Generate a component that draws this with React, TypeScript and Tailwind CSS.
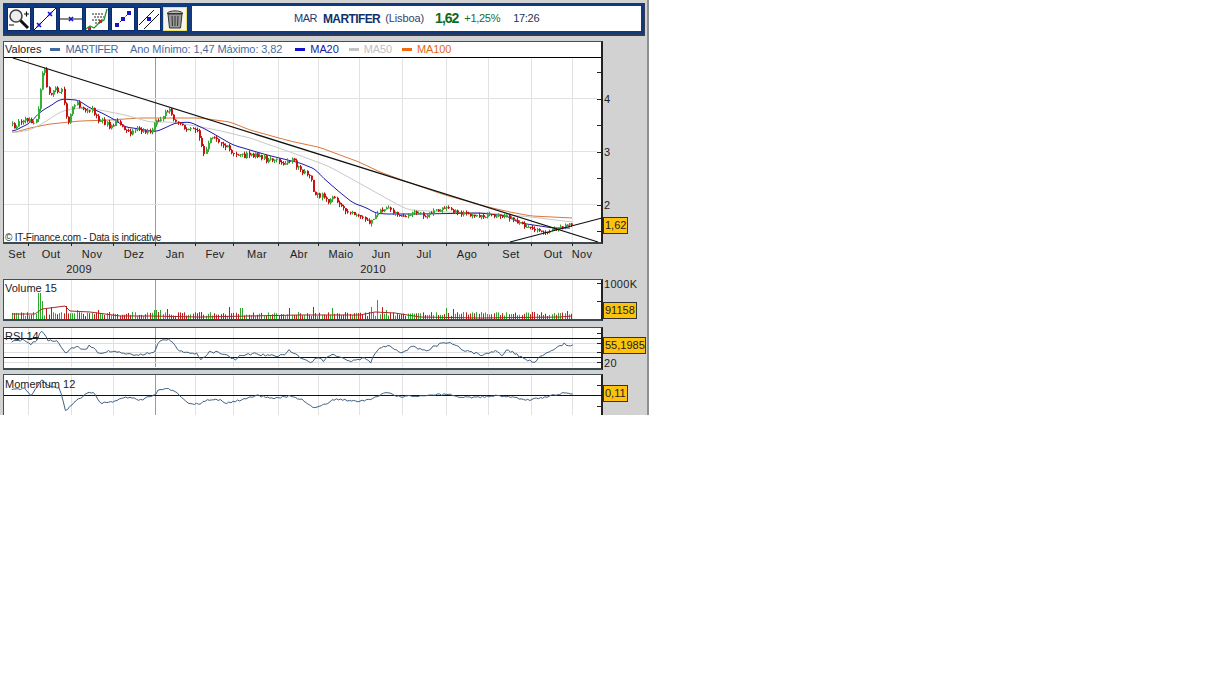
import React from "react";

type P = [number, number];

const lerp = (pts: P[], x: number) => {
  if (x <= pts[0][0]) return pts[0][1];
  for (let i = 1; i < pts.length; i++) {
    if (x <= pts[i][0]) {
      const [a, b] = pts[i - 1];
      const [c, d] = pts[i];
      return b + ((d - b) * (x - a)) / (c - a);
    }
  }
  return pts[pts.length - 1][1];
};
const line = (pts: P[]) => pts.map((p) => p[0].toFixed(1) + "," + p[1].toFixed(1)).join(" ");

let seed = 12345;
const rnd = () => {
  seed = (seed * 1664525 + 1013904223) % 4294967296;
  return seed / 4294967296;
};

const smooth = (pts: P[]) => {
  const start = pts[0][0];
  const end = pts[pts.length - 1][0];
  const out: P[] = [];
  for (let x = start; x <= end; x += 2) {
    let sum = 0;
    let n = 0;
    for (let k = -4; k <= 4; k += 2) {
      const q = x + k;
      if (q < start || q > end) continue;
      sum += lerp(pts, q);
      n++;
    }
    out.push([x, sum / n]);
  }
  return out;
};
const jitter = (pts: P[], amp: number) => {
  const out: P[] = [];
  const end = pts[pts.length - 1][0];
  for (let x = pts[0][0]; x <= end; x += 2.15) {
    out.push([x, lerp(pts, x) + (rnd() - 0.5) * amp]);
  }
  return out;
};

const price: P[] = [[12,122],[14,127],[18,122],[24,118],[30,120],[34,122],[37,115],[39,95],[42,75],[44,70],[46,85],[50,95],[53,88],[58,90],[62,88],[63,100],[66,118],[68,125],[72,108],[76,103],[80,108],[86,112],[92,108],[97,120],[104,122],[110,128],[117,122],[122,126],[130,133],[135,130],[142,132],[152,132],[156,120],[162,115],[168,110],[172,118],[176,124],[182,125],[190,130],[197,132],[200,143],[203,155],[208,142],[212,135],[218,142],[225,145],[232,153],[236,158],[242,155],[250,156],[258,156],[268,160],[278,162],[285,164],[292,160],[300,170],[310,178],[314,195],[320,195],[330,202],[334,197],[340,207],[348,213],[360,215],[370,223],[377,212],[387,207],[392,212],[400,215],[405,216],[412,212],[420,213],[425,216],[432,212],[445,208],[452,211],[460,213],[472,216],[480,217],[490,215],[505,216],[510,218],[520,223],[525,227],[535,230],[542,231],[550,231],[560,227],[570,224],[573,223]];
const ma20: P[] = [[12,132],[30,123],[40,112],[55,103],[60,99],[78,100],[90,108],[100,112],[115,120],[125,127],[140,129],[155,132],[165,128],[175,123],[190,122],[207,130],[233,145],[267,155],[300,163],[317,170],[320,175],[337,190],[353,203],[367,208],[375,213],[385,214],[420,214],[480,213],[507,216],[520,223],[553,228],[570,228]];
const ma50: P[] = [[12,133],[30,130],[45,122],[60,112],[75,108],[100,110],[125,115],[150,122],[170,122],[190,125],[217,130],[250,138],[290,152],[320,163],[330,167],[359,183],[402,207],[410,210],[446,212],[488,213],[531,217],[572,222]];
const ma100: P[] = [[12,133],[30,128],[50,124],[80,121],[110,120],[140,118],[170,118],[200,118],[230,122],[250,130],[290,141],[320,147.5],[340,155],[359,162],[380,172],[402,180],[445,195],[488,207],[510,212],[531,216],[572,218]];
const volMa: P[] = [[12,314],[35,314],[42,309],[50,308],[65,306],[70,311],[90,312],[120,316],[150,316],[200,317],[250,316],[300,315],[330,315],[360,315],[375,312],[395,313],[420,317],[480,318],[560,317],[572,316]];

const rsiBase: P[] = ([[35,205],[50,195],[70,195],[95,208],[110,195],[125,167],[145,195],[170,195],[195,235],[225,215],[250,225],[270,212],[300,235],[335,227],[400,240],[465,233],[470,205],[505,190],[540,228],[590,235],[605,255],[630,230],[660,233],[705,253],[725,240],[770,235],[800,243],[850,240],[865,225],[900,245],[935,265],[950,245],[975,262]] as P[]).map(([x, y]) => [x / 3, y / 3 + 275] as P).concat(([[0,262],[30,240],[60,245],[90,260],[140,250],[150,265],[170,228],[200,212],[250,235],[275,215],[320,228],[345,212],[385,200],[430,225],[490,240],[530,225],[550,245],[555,220],[600,245],[640,262],[670,240],[710,218],[735,205],[745,215],[760,210]] as P[]).map(([x, y]) => [x / 3 + 320, y / 3 + 275] as P));
const momBase: P[] = ([[35,345],[75,340],[95,362],[125,312],[140,332],[180,340],[197,410],[225,380],[265,352],[285,355],[300,385],[340,380],[375,365],[420,375],[465,360],[475,345],[500,338],[530,352],[565,385],[600,388],[620,375],[660,375],[680,385],[710,378],[770,362],[830,370],[870,363],[910,375],[940,400],[955,395]] as P[]).map(([x, y]) => [x / 3, y / 3 + 275] as P).concat(([[0,395],[45,372],[75,375],[110,380],[160,370],[200,352],[240,365],[300,362],[380,358],[440,368],[540,362],[630,375],[680,365],[730,355],[760,355]] as P[]).map(([x, y]) => [x / 3 + 320, y / 3 + 275] as P));
const rsi = jitter(rsiBase, 2.6);
const mom = jitter(momBase, 1.8);

const spikes: Record<number, number> = { 37: 26, 39: 37, 41: 26, 43: 18, 46: 10, 51: 12, 65: 13, 76: 9, 98: 9, 132: 7, 155: 9, 161: 9, 166: 10, 201: 7, 230: 12, 241: 11, 289: 11, 312: 12, 333: 11, 372: 12, 378: 19, 381: 12, 386: 9, 447: 11, 453: 10, 512: 5, 553: 6, 560: 6, 567: 8 };

type C = { x: number; o: number; c: number; hi: number; lo: number; green: boolean; vol: number };
const candles: C[] = [];
{
  let prev = 124;
  for (let x = 12; x <= 573; x += 2.15) {
    const amp = x < 335 ? 6 : 3.5;
    const c = lerp(price, x) + (rnd() - 0.5) * amp;
    const o = prev;
    const green = c < o;
    const hi = Math.min(o, c) - rnd() * 2.5;
    const lo = Math.max(o, c) + rnd() * 3;
    let vol = 3 + rnd() * 4;
    for (const k in spikes) if (Math.abs(Number(k) - x) < 1.1) vol = spikes[k];
    candles.push({ x: Math.round(x), o, c, hi, lo, green, vol });
    prev = c;
  }
}

const vGrid = [28, 71, 113, 195, 233, 278, 318, 359, 402, 446, 488, 531, 572];
const months: [string, number][] = [["Set",17],["Out",51],["Nov",92],["Dez",134],["Jan",175],["Fev",215],["Mar",257],["Abr",299],["Maio",341],["Jun",381],["Jul",424],["Ago",467],["Set",511],["Out",553],["Nov",582]];

const GridV = ({ y1, y2 }: { y1: number; y2: number }) => (
  <g>
    {vGrid.map((x) => (
      <line key={x} x1={x + 0.5} x2={x + 0.5} y1={y1} y2={y2} stroke="#e2e2e2" />
    ))}
    <line x1={155.5} x2={155.5} y1={y1} y2={y2} stroke="#9a9a9a" />
  </g>
);
const Ticks = ({ ys }: { ys: number[] }) => (
  <g>
    {ys.map((y) => (
      <line key={y} x1={597} x2={602} y1={y + 0.5} y2={y + 0.5} stroke="#222" />
    ))}
  </g>
);
const axisText = { fontFamily: '"Liberation Sans", Arial, sans-serif', fontSize: 11, fill: "#222", letterSpacing: 0.3 };

const Badge = ({ text, top, w }: { text: string; top: number; w: number }) => (
  <div
    className="absolute left-[599px] h-[17px] bg-[#fcc20e] border border-[#333] text-[11px] leading-[15px] text-[#222] pl-[1px] overflow-hidden"
    style={{ top, width: w }}
  >
    {text}
  </div>
);

const Btn = ({ children, active }: { children: React.ReactNode; active?: boolean }) => (
  <div className={"w-[24px] h-[24px] shrink-0 border " + (active ? "border-[#f0e060] bg-[#f4f4ee]" : "border-[#0b2a6b] bg-white")}>
    <svg width="22" height="22" viewBox="0 0 22 22" className="block">
      {children}
    </svg>
  </div>
);
const BlueX = ({ x, y }: { x: number; y: number }) => (
  <path d={`M${x - 2} ${y - 2}L${x + 2} ${y + 2}M${x + 2} ${y - 2}L${x - 2} ${y + 2}`} stroke="#1414c8" strokeWidth="1.6" />
);

export default function App() {
  return (
    <div className="min-h-screen bg-white font-['Liberation_Sans',Arial,sans-serif]">
      <div className="w-[649px] h-[415px] overflow-hidden bg-[#d2d2d2] border-r-2 border-[#8a8f92] pl-[3px] pt-[3px]">
        {/* toolbar */}
        <div className="w-[642px] h-[33px] bg-[#0f3a80] border-b-2 border-r border-[#333b55] flex items-center pl-[4px] pr-[3px] gap-[2px]">
          <Btn>
            <circle cx="8" cy="8" r="6" fill="#eee" stroke="#444" strokeWidth="1.6" />
            <path d="M12.500 12.500L20 20" stroke="#111" strokeWidth="3" />
            <path d="M16 6h5M18.500 3.500v5M1 17h5" stroke="#111" strokeWidth="1.2" />
          </Btn>
          <Btn>
            <path d="M0 22L22 0" stroke="#111" strokeWidth="1" />
            <BlueX x={5} y={17} />
            <BlueX x={16} y={6} />
          </Btn>
          <Btn>
            <path d="M0 11H22" stroke="#111" strokeWidth="1" />
            <BlueX x={11} y={11} />
          </Btn>
          <Btn>
            <path d="M5 4H18V17H5Z" fill="#fff" />
            <path d="M6 6H18M8 9H18M6 12H17M9 15H15" stroke="#222" strokeWidth="1" strokeDasharray="2 1" />
            <path d="M0 21L4 18L8 20L13 15L18 12L21 1" fill="none" stroke="#1a9a2a" strokeWidth="1.3" />
            <path d="M2 19h3v3H2zM13 12h3v3h-3z" fill="#cc2222" />
          </Btn>
          <Btn>
            <path d="M5 17L17 5" stroke="#333" strokeWidth="1" strokeDasharray="2 2" />
            <path d="M3 15h4v4H3zM9 9h4v4H9zM15 3h4v4h-4z" fill="#1414c8" />
          </Btn>
          <Btn>
            <path d="M1 17L16 2M6 21L21 6" stroke="#111" strokeWidth="1" />
            <path d="M9 9h4v4H9z" fill="#1414c8" />
          </Btn>
          <Btn active>
            <path d="M4 6H18L16.500 20H5.500Z" fill="#999" stroke="#333" strokeWidth="1" />
            <path d="M8 8L8.500 18M11 8V18M14 8L13.500 18" stroke="#333" strokeWidth="1" />
            <path d="M3 5.500C5 2 17 2 19 5.500Z" fill="#bbb" stroke="#333" strokeWidth="1" />
          </Btn>
          <div className="ml-[3px] flex-1 h-[25px] bg-white flex items-center pl-[102px] text-[#1c3a78] text-[11px] whitespace-nowrap">
            <span className="tracking-[-0.5px]">MAR</span>
            <span className="ml-[6px] text-[12px] font-bold text-[#12306e] tracking-[-0.6px]">MARTIFER</span>
            <span className="ml-[5px] text-[#333f66] tracking-[-0.1px]">(Lisboa)</span>
            <span className="ml-[11px] text-[14px] font-bold text-[#0e6b20] tracking-[-1px]">1,62</span>
            <span className="ml-[6px] text-[#1c6a30] tracking-[-0.3px]">+1,25%</span>
            <span className="ml-[13px] text-[#23335a] tracking-[-0.3px]">17:26</span>
          </div>
        </div>

        {/* main chart */}
        <div className="relative mt-[5px] w-[600px] h-[203px] bg-white border-t border-l border-[#3f5055] border-r-2 border-b-2 border-r-[#222] border-b-[#3a4a50]">
          <div className="h-[16px] border-b border-black flex items-center text-[11px] pl-[1px] whitespace-nowrap">
            <span className="text-[#222]">Valores</span>
            <span className="ml-[9px] w-[10px] h-[3px] bg-[#3e6aa6]" />
            <span className="ml-[5px] text-[#4a6d9e] tracking-[-0.45px]">MARTIFER</span>
            <span className="ml-[12px] text-[#4a6d9e] tracking-[-0.1px]">Ano Mínimo: 1,47 Máximo: 3,82</span>
            <span className="ml-[13px] w-[10px] h-[3px] bg-[#1010d0]" />
            <span className="ml-[5px] text-[#1a1aa0] tracking-[-0.1px]">MA20</span>
            <span className="ml-[10px] w-[10px] h-[3px] bg-[#c4c4c4]" />
            <span className="ml-[5px] text-[#c0c0c0] tracking-[-0.1px]">MA50</span>
            <span className="ml-[10px] w-[10px] h-[3px] bg-[#f26a10]" />
            <span className="ml-[5px] text-[#e06a20] tracking-[-0.1px]">MA100</span>
          </div>
          <svg width="598" height="184" viewBox="4 58 598 184" className="block overflow-visible">
            <GridV y1={58} y2={242} />
            {[98, 151, 204].map((y) => (
              <line key={y} x1={4} x2={597} y1={y + 0.5} y2={y + 0.5} stroke="#e2e2e2" />
            ))}
            <polyline points={line(smooth(ma100))} fill="none" stroke="#d9783a" strokeWidth="1" />
            <polyline points={line(smooth(ma50))} fill="none" stroke="#c8c8c8" strokeWidth="1" />
            <polyline points={line(smooth(ma20))} fill="none" stroke="#1a1aa8" strokeWidth="1" />
            {candles.map((c, i) => (
              <g key={i}>
                <line x1={c.x + 0.5} x2={c.x + 0.5} y1={c.hi} y2={c.lo} stroke={c.green ? "#2f9e2f" : "#b51818"} />
                <rect x={c.x} y={Math.min(c.o, c.c)} width={2} height={Math.max(1, Math.abs(c.o - c.c))} fill={c.green ? "#35b035" : "#cc1010"} />
              </g>
            ))}
            <line x1={13} y1={58} x2={598} y2={242} stroke="#111" strokeWidth="1.3" />
            <line x1={510} y1={242} x2={602} y2={218} stroke="#111" strokeWidth="1.1" />
            <Ticks ys={[72, 99, 125, 152, 178, 205, 231]} />
            {[["4", 103], ["3", 156], ["2", 209]].map(([t, y]) => (
              <text key={t} x={604} y={Number(y)} style={axisText}>{t}</text>
            ))}
            {vGrid.concat(155).map((x) => (
              <line key={x} x1={x + 0.5} x2={x + 0.5} y1={243} y2={246} stroke="#222" />
            ))}
            {months.map(([m, x], i) => (
              <text key={i} x={x} y={258} textAnchor="middle" style={axisText}>{m}</text>
            ))}
            <text x={79} y={273} textAnchor="middle" style={axisText}>2009</text>
            <text x={373} y={273} textAnchor="middle" style={axisText}>2010</text>
          </svg>
          <span className="absolute left-[1px] bottom-[-2px] text-[10px] leading-[12px] text-[#222] tracking-[-0.2px] whitespace-nowrap">© IT-Finance.com - Data is indicative</span>
          <Badge text="1,62" top={175} w={25} />
        </div>

        {/* volume */}
        <div className="relative mt-[35px] w-[600px] h-[42px] bg-white border-t border-l border-[#3f5055] border-r-2 border-b-2 border-r-[#222] border-b-[#3a4a50]">
          <svg width="598" height="39" viewBox="4 280 598 39" className="block overflow-visible">
            <GridV y1={280} y2={319} />
            {candles.map((c, i) => (
              <line key={i} x1={c.x + 0.5} x2={c.x + 0.5} y1={319 - c.vol} y2={319} stroke={c.green ? "#2ea82e" : "#c01a1a"} />
            ))}
            <polyline points={line(volMa)} fill="none" stroke="#a52a2a" strokeWidth="1" />
            <Ticks ys={[283, 301]} />
            <text x={604} y={288} style={axisText}>1000K</text>
          </svg>
          <span className="absolute left-[1px] top-[2px] text-[11px] leading-[13px] text-[#222]">Volume 15</span>
          <Badge text="91158" top={22} w={34} />
        </div>

        {/* RSI */}
        <div className="relative mt-[6px] w-[600px] h-[43px] bg-white border-t border-l border-[#3f5055] border-r-2 border-b-2 border-r-[#222] border-b-[#3a4a50]">
          <svg width="598" height="40" viewBox="4 328 598 40" className="block overflow-visible">
            <GridV y1={328} y2={367} />
            {[343, 352, 362].map((y) => (
              <line key={y} x1={4} x2={597} y1={y + 0.5} y2={y + 0.5} stroke="#dedede" />
            ))}
            <line x1={4} x2={602} y1={338.5} y2={338.5} stroke="#111" />
            <line x1={4} x2={602} y1={357.5} y2={357.5} stroke="#111" />
            <polyline points={line(rsi)} fill="none" stroke="#3f5f80" strokeWidth="1" />
            <Ticks ys={[333, 343, 352, 362]} />
            <text x={604} y={367} style={axisText}>20</text>
          </svg>
          <span className="absolute left-[1px] top-[2px] text-[11px] leading-[13px] text-[#222]">RSI 14</span>
          <Badge text="55,1985" top={9} w={43} />
        </div>

        {/* momentum */}
        <div className="relative mt-[4px] w-[600px] h-[43px] bg-white border-t border-l border-[#3f5055] border-r-2 border-r-[#222]">
          <svg width="598" height="40" viewBox="4 375 598 40" className="block overflow-visible">
            <GridV y1={375} y2={415} />
            <line x1={4} x2={602} y1={395.5} y2={395.5} stroke="#111" />
            <polyline points={line(mom)} fill="none" stroke="#3f5f80" strokeWidth="1" />
            <Ticks ys={[385, 406]} />
          </svg>
          <span className="absolute left-[1px] top-[3px] text-[11px] leading-[13px] text-[#222]">Momentum 12</span>
          <Badge text="0,11" top={10} w={25} />
        </div>
      </div>
    </div>
  );
}
